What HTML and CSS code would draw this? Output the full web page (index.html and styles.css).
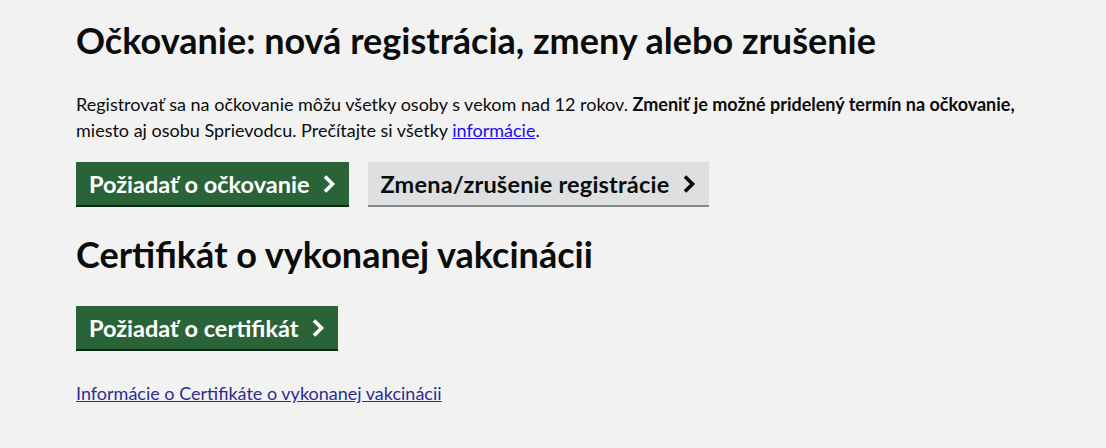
FILE: index.html
```html
<!DOCTYPE html>
<html lang="sk">
<head>
<meta charset="utf-8">
<title>Očkovanie</title>
<link rel="stylesheet" href="styles.css">
</head>
<body>
<main class="page">
  <h1 class="h1">Očkovanie: nová registrácia, zmeny alebo zrušenie</h1>
  <p class="body">Registrovať sa na očkovanie môžu všetky osoby s vekom nad 12 rokov. <strong>Zmeniť je možné pridelený termín na očkovanie,</strong> miesto aj osobu Sprievodcu. Prečítajte si všetky <a class="link" href="#">informácie</a>.</p>
  <div class="btn-row">
    <a class="btn btn-primary" href="#">Požiadať o očkovanie <svg class="chev" viewBox="0 0 14 20" width="14" height="20"><path d="M3 2.5 L10.5 10 L3 17.5" fill="none" stroke="currentColor" stroke-width="3.6"/></svg></a>
    <a class="btn btn-secondary" href="#">Zmena/zrušenie registrácie <svg class="chev" viewBox="0 0 14 20" width="14" height="20"><path d="M3 2.5 L10.5 10 L3 17.5" fill="none" stroke="currentColor" stroke-width="3.6"/></svg></a>
  </div>
  <h2 class="h2">Certifikát o vykonanej vakcinácii</h2>
  <div class="btn-row btn-row-2">
    <a class="btn btn-primary" href="#">Požiadať o certifikát <svg class="chev" viewBox="0 0 14 20" width="14" height="20"><path d="M3 2.5 L10.5 10 L3 17.5" fill="none" stroke="currentColor" stroke-width="3.6"/></svg></a>
  </div>
  <p class="small"><a class="link-visited" href="#">Informácie o Certifikáte o vykonanej vakcinácii</a></p>
</main>
</body>
</html>
```
FILE: styles.css
```css
html, body {
  margin: 0;
  background: #f2f2f2;
}
body {
  font-family: Lato, "Noto Sans", sans-serif;
  color: #0b0c0c;
}
.page {
  padding: 20px 76px 0 76px;
}
.h1 {
  margin: 0;
  font-size: 36px;
  line-height: 40px;
  font-weight: 700;
}
.body {
  margin: 31px 0 0 0;
  max-width: 972px;
  font-size: 18px;
  line-height: 26px;
}
.body strong { font-weight: 700; }
.link { color: #1a0dee; }
.btn-row {
  display: flex;
  gap: 19px;
  margin-top: 19px;
}
.btn {
  display: inline-flex;
  align-items: center;
  gap: 13px;
  height: 43px;
  padding: 0 13px;
  font-size: 23.5px;
  font-weight: 700;
  text-decoration: none;
}
.btn-primary {
  background: #2b6339;
  color: #fff;
  box-shadow: 0 2px 0 #0f2a16;
}
.btn-secondary {
  background: #dedfe0;
  color: #0b0c0c;
  padding: 0 13px 0 12px;
  letter-spacing: 0.2px;
  box-shadow: 0 2px 0 #858686;
}
.chev { flex: none; }
.h2 {
  margin: 29px 0 0 0;
  font-size: 36px;
  line-height: 40px;
  font-weight: 700;
}
.btn-row-2 { margin-top: 32px; }
.small {
  margin: 31px 0 0 0;
  font-size: 18px;
  line-height: 26px;
}
.link-visited { color: #2e2d8f; }
```
